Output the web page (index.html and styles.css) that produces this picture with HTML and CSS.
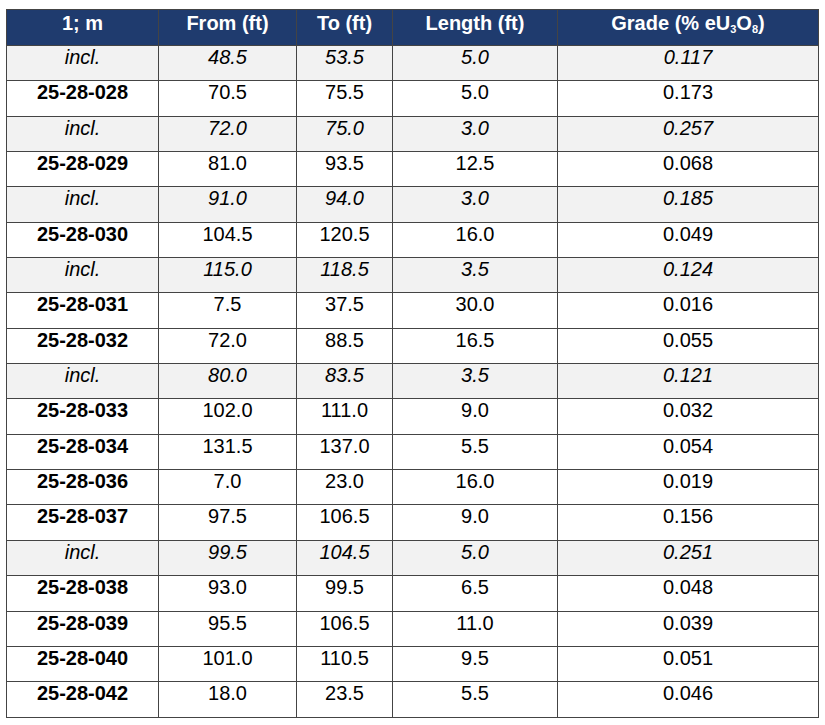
FILE: index.html
```html
<!DOCTYPE html>
<html>
<head>
<meta charset="utf-8">
<link rel="stylesheet" href="styles.css">
</head>
<body>
<div class="wrap">
<table class="assay">
  <colgroup>
    <col class="c1"><col class="c2"><col class="c3"><col class="c4"><col class="c5">
  </colgroup>
  <thead>
    <tr><th>1; m</th><th>From (ft)</th><th>To (ft)</th><th>Length (ft)</th><th>Grade (% eU<sub>3</sub>O<sub>8</sub>)</th></tr>
  </thead>
  <tbody>
    <tr class="sub"><td>incl.</td><td>48.5</td><td>53.5</td><td>5.0</td><td>0.117</td></tr>
    <tr><td class="hole">25-28-028</td><td>70.5</td><td>75.5</td><td>5.0</td><td>0.173</td></tr>
    <tr class="sub"><td>incl.</td><td>72.0</td><td>75.0</td><td>3.0</td><td>0.257</td></tr>
    <tr><td class="hole">25-28-029</td><td>81.0</td><td>93.5</td><td>12.5</td><td>0.068</td></tr>
    <tr class="sub"><td>incl.</td><td>91.0</td><td>94.0</td><td>3.0</td><td>0.185</td></tr>
    <tr><td class="hole">25-28-030</td><td>104.5</td><td>120.5</td><td>16.0</td><td>0.049</td></tr>
    <tr class="sub"><td>incl.</td><td>115.0</td><td>118.5</td><td>3.5</td><td>0.124</td></tr>
    <tr><td class="hole">25-28-031</td><td>7.5</td><td>37.5</td><td>30.0</td><td>0.016</td></tr>
    <tr><td class="hole">25-28-032</td><td>72.0</td><td>88.5</td><td>16.5</td><td>0.055</td></tr>
    <tr class="sub"><td>incl.</td><td>80.0</td><td>83.5</td><td>3.5</td><td>0.121</td></tr>
    <tr><td class="hole">25-28-033</td><td>102.0</td><td>111.0</td><td>9.0</td><td>0.032</td></tr>
    <tr><td class="hole">25-28-034</td><td>131.5</td><td>137.0</td><td>5.5</td><td>0.054</td></tr>
    <tr><td class="hole">25-28-036</td><td>7.0</td><td>23.0</td><td>16.0</td><td>0.019</td></tr>
    <tr><td class="hole">25-28-037</td><td>97.5</td><td>106.5</td><td>9.0</td><td>0.156</td></tr>
    <tr class="sub"><td>incl.</td><td>99.5</td><td>104.5</td><td>5.0</td><td>0.251</td></tr>
    <tr><td class="hole">25-28-038</td><td>93.0</td><td>99.5</td><td>6.5</td><td>0.048</td></tr>
    <tr><td class="hole">25-28-039</td><td>95.5</td><td>106.5</td><td>11.0</td><td>0.039</td></tr>
    <tr><td class="hole">25-28-040</td><td>101.0</td><td>110.5</td><td>9.5</td><td>0.051</td></tr>
    <tr><td class="hole">25-28-042</td><td>18.0</td><td>23.5</td><td>5.5</td><td>0.046</td></tr>
  </tbody>
</table>
</div>
</body>
</html>
```

FILE: styles.css
```css
html, body {
  margin: 0;
  padding: 0;
  background: #ffffff;
}

.wrap {
  padding: 9px 0 0 6px;
}

.assay {
  border-collapse: collapse;
  table-layout: fixed;
  width: 812px;
  font-family: "Liberation Sans", Arial, sans-serif;
  font-size: 20px;
  color: #000000;
}

.c1 { width: 152px; }
.c2 { width: 138px; }
.c3 { width: 96px; }
.c4 { width: 165px; }
.c5 { width: 261px; }

.assay th,
.assay td {
  border: 1px solid #444444;
  padding: 0;
  text-align: center;
  vertical-align: top;
  line-height: 23px;
}

.assay thead tr {
  height: 36px;
}

.assay th {
  background: #1f3b6e;
  color: #ffffff;
  font-weight: bold;
  padding-top: 2px;
}

.assay th sub {
  font-size: 11px;
  vertical-align: -3px;
  line-height: 0;
}

.assay tbody tr {
  height: 35.35px;
}

.assay tr.sub td {
  background: #f2f2f2;
  font-style: italic;
}

.assay td.hole {
  font-weight: bold;
}
```
